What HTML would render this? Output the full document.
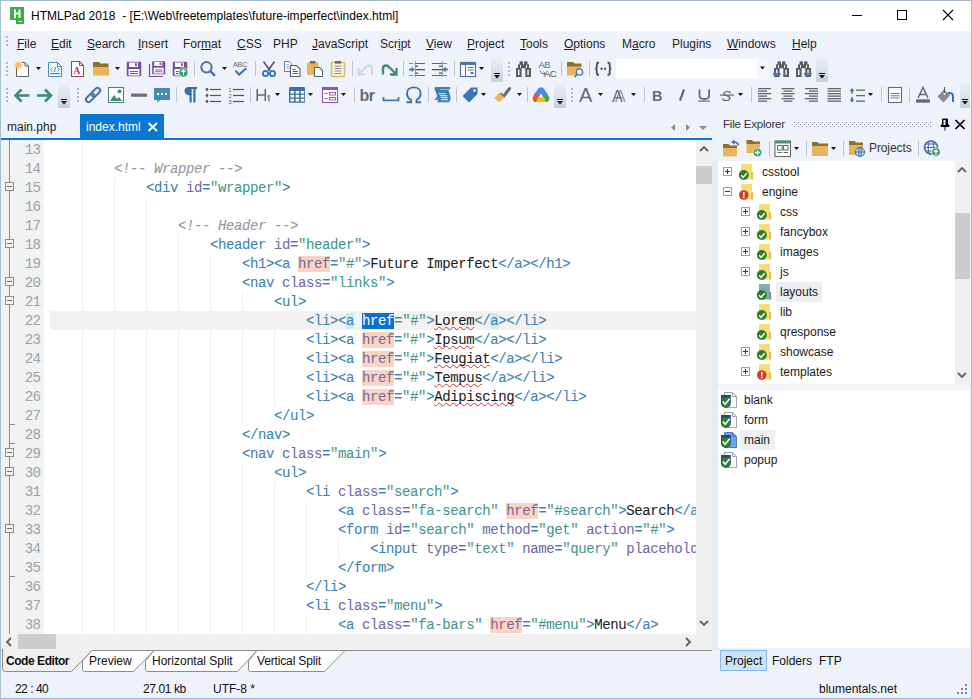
<!DOCTYPE html>
<html><head><meta charset="utf-8"><style>
*{margin:0;padding:0;box-sizing:border-box}
html,body{width:972px;height:699px;overflow:hidden;background:#eef3fb;font-family:"Liberation Sans",sans-serif;font-size:12px;color:#000;position:relative}
.abs,.tx{position:absolute;white-space:pre}
.tx{line-height:1}
#frame{position:absolute;left:0;top:0;width:972px;height:699px;border:1px solid #a4c0d6;border-bottom-color:#90c0ea;border-top-color:#a6b8cc;pointer-events:none}
#title{position:absolute;left:1px;top:1px;width:970px;height:30px;background:#fff}
#editor{position:absolute;left:1px;top:140px;width:695px;height:494px;background:#fff;overflow:hidden}
#gutter{position:absolute;left:0;top:0;width:43px;height:494px;background:#f0f2f4}
#foldline{position:absolute;left:8px;top:0;width:1px;height:494px;background:#8c8c8c}
.fb{position:absolute;left:4px;width:9px;height:9px;border:1px solid #8c8c8c;background:#f0f2f4}
.fb:after{content:"";position:absolute;left:1px;top:3px;width:5px;height:1px;background:#6c6c6c}
.ft{position:absolute;left:8px;width:6px;height:1px;background:#8c8c8c}
.ln{position:absolute;left:0;width:39.5px;text-align:right;font-family:"Liberation Mono",monospace;font-size:14.2px;letter-spacing:-0.6px;line-height:19px;color:#a0a0a0;margin-top:1px}
.code{position:absolute;left:49px;top:1px;font-family:"Liberation Mono",monospace;font-size:14px;letter-spacing:-0.4px;-webkit-text-stroke:0.05px;line-height:19px;white-space:pre;color:#1b1b1b}
.cur{position:absolute;left:49px;width:660px;height:19px;background:#f2f2f2}
.g{position:absolute;width:1px;height:19px;background:#efefef}
.t,.m{color:#3a82b0}
.m{background:#cdebf0}
.a{color:#6d6aa8}
.e{color:#3a82b0}
.v{color:#3e968b}
.c{color:#959595;font-style:italic}
.h{color:#7b6a96;background:#f9d3c3}
.s{color:#fff;background:#0a6fd2}
.w{text-decoration:underline wavy #d03030;text-decoration-thickness:1px;text-underline-offset:1px;text-decoration-skip-ink:none}
#vscroll{position:absolute;left:696px;top:140px;width:16px;height:494px;background:#f0f0f0}
#hscroll{position:absolute;left:1px;top:634px;width:711px;height:16px;background:#f0f0f0}
#splitter{position:absolute;left:712px;top:161px;width:6px;height:489px;background:#e2ecf8}
#rpanel{position:absolute;left:718px;top:161px;width:252px;height:223px;background:#fff}
#rgap{position:absolute;left:718px;top:384px;width:252px;height:6px;background:#f2f4f8}
#rlist{position:absolute;left:718px;top:390px;width:252px;height:258px;background:#fff}
#tabline{position:absolute;left:1px;top:138px;width:711px;height:2px;background:#0a78d0}
#acttab{position:absolute;left:80px;top:114px;width:84px;height:25px;background:#0a78d0}
.mi{top:38px;font-size:12px;color:#1e1e1e}
u{text-decoration:underline;text-underline-offset:1px;text-decoration-skip-ink:none}
.tr{font-size:12px;color:#1a1a1a;margin-top:1px}

</style></head><body>
<div id="title"></div>
<div class="tx" style="left:31px;top:10px;font-size:12px;letter-spacing:0.03px">HTMLPad 2018  - [E:\Web\freetemplates\future-imperfect\index.html]</div>
<div class="abs" style="left:852px;top:15px;width:10px;height:1px;background:#000"></div>
<div class="abs" style="left:897px;top:10px;width:10px;height:10px;border:1px solid #000"></div>
<svg class="abs" style="left:942px;top:9px" width="12" height="12"><path d="M1 1L11 11M11 1L1 11" stroke="#000" stroke-width="1.1"/></svg>
<!-- menu -->
<div id="menu">
<span class="tx mi" style="left:17px"><u>F</u>ile</span>
<span class="tx mi" style="left:51px"><u>E</u>dit</span>
<span class="tx mi" style="left:87px"><u>S</u>earch</span>
<span class="tx mi" style="left:138px"><u>I</u>nsert</span>
<span class="tx mi" style="left:183px">For<u>m</u>at</span>
<span class="tx mi" style="left:237px"><u>C</u>SS</span>
<span class="tx mi" style="left:273px">PHP</span>
<span class="tx mi" style="left:312px"><u>J</u>avaScript</span>
<span class="tx mi" style="left:380px">Scr<u>i</u>pt</span>
<span class="tx mi" style="left:426px"><u>V</u>iew</span>
<span class="tx mi" style="left:467px"><u>P</u>roject</span>
<span class="tx mi" style="left:520px"><u>T</u>ools</span>
<span class="tx mi" style="left:564px"><u>O</u>ptions</span>
<span class="tx mi" style="left:622px">M<u>a</u>cro</span>
<span class="tx mi" style="left:672px">Plugins</span>
<span class="tx mi" style="left:727px"><u>W</u>indows</span>
<span class="tx mi" style="left:792px"><u>H</u>elp</span>
</div>
<div id="tabline"></div>
<div id="acttab"></div>
<div class="tx" style="left:7px;top:121px;font-size:12px;color:#1e1e1e">main.php</div>
<div class="tx" style="left:86px;top:121px;font-size:12px;color:#fff">index.html</div>
<svg class="abs" style="left:147px;top:122px" width="12" height="10"><path d="M1.5 1L10 9M10 1L1.5 9" stroke="#fff" stroke-width="1.9"/></svg>
<svg class="abs" style="left:668px;top:121px" width="42" height="12"><path d="M7 3L3 6.5L7 10Z" fill="#8a8a8a"/><path d="M18 3L22 6.5L18 10Z" fill="#8a8a8a"/><path d="M31 5H39L35 9Z" fill="#8a8a8a"/></svg>
<div class="tx" style="left:723px;top:119px;font-size:11.5px;letter-spacing:-0.2px;color:#333">File Explorer</div>
<svg class="abs" style="left:794px;top:122px" width="138" height="6"><defs><pattern id="dots" width="4" height="4" patternUnits="userSpaceOnUse"><rect x="0" y="0" width="1" height="1" fill="#858c98"/><rect x="2" y="2" width="1" height="1" fill="#858c98"/><rect x="1" y="1" width="1" height="1" fill="#ffffff"/><rect x="3" y="3" width="1" height="1" fill="#ffffff"/></pattern></defs><rect x="0" y="0" width="138" height="5" fill="url(#dots)"/></svg>
<svg class="abs" style="left:940px;top:118px" width="10" height="13"><path d="M2.5 1H7.5V7H9V8.5H1V7H2.5Z M5 8.5V12.5" fill="#000" stroke="#000" stroke-width="1"/><rect x="3.5" y="2" width="2" height="5" fill="#fff"/></svg>
<svg class="abs" style="left:954px;top:119px" width="12" height="11"><path d="M1.5 1L10.5 10M10.5 1L1.5 10" stroke="#000" stroke-width="1.7"/></svg>
<div id="vscroll"></div>
<div class="abs" style="left:696px;top:166px;width:16px;height:18px;background:#cdcdcd"></div>
<svg class="abs" style="left:699px;top:145px" width="10" height="8"><path d="M1 6L5 2L9 6" stroke="#606060" stroke-width="1.8" fill="none"/></svg>
<svg class="abs" style="left:699px;top:619px" width="10" height="8"><path d="M1 2L5 6L9 2" stroke="#606060" stroke-width="1.8" fill="none"/></svg>
<div id="hscroll"></div>
<div class="abs" style="left:18px;top:634px;width:38px;height:15px;background:#cdcdcd"></div>
<svg class="abs" style="left:5px;top:637px" width="8" height="10"><path d="M6 1L2 5L6 9" stroke="#606060" stroke-width="1.8" fill="none"/></svg>
<svg class="abs" style="left:684px;top:637px" width="8" height="10"><path d="M2 1L6 5L2 9" stroke="#606060" stroke-width="1.8" fill="none"/></svg>
<div class="abs" style="left:1px;top:650px;width:711px;height:1px;background:#a0a0a0"></div>
<div id="splitter"></div>
<div id="rpanel"></div>
<div class="abs" style="left:955px;top:161px;width:15px;height:223px;background:#f0f0f0"></div>
<div class="abs" style="left:955px;top:213px;width:15px;height:66px;background:#cdcdcd"></div>
<svg class="abs" style="left:957px;top:166px" width="10" height="8"><path d="M1 6L5 2L9 6" stroke="#606060" stroke-width="1.8" fill="none"/></svg>
<svg class="abs" style="left:957px;top:371px" width="10" height="8"><path d="M1 2L5 6L9 2" stroke="#606060" stroke-width="1.8" fill="none"/></svg>
<div id="rgap"></div>
<div id="rlist"></div>
<div class="tx" style="left:869px;top:142px;font-size:12px;letter-spacing:-0.1px;color:#333">Projects</div>
<!-- bottom tabs -->
<svg class="abs" style="left:0;top:649px" width="712" height="24">
<path d="M1.5 1.5H82V12V21.5Q82 22.5 83 22.5H71.5L82 12" fill="none"/>
<path d="M154 1.5H92L82.5 12V20.5Q82.5 22.5 84.5 22.5H133.5L154 1.5Z" fill="#fff" stroke="#8c8c8c" stroke-width="1"/>
<path d="M257 1.5H154L145.5 12V20.5Q145.5 22.5 147.5 22.5H237.5L257 1.5Z" fill="#fff" stroke="#8c8c8c" stroke-width="1"/>
<path d="M345 1.5H257L248.5 12V20.5Q248.5 22.5 250.5 22.5H324.5L345 1.5Z" fill="#fff" stroke="#8c8c8c" stroke-width="1"/>
<path d="M1 0.5V1H82" fill="none"/>
<path d="M2.5 0V19.5Q2.5 22.5 5.5 22.5H71.5L92 1.5H712" fill="#f0f0f0" stroke="#8c8c8c" stroke-width="1"/>
</svg>
<div class="tx" style="left:6px;top:655px;font-size:12px;font-weight:bold;letter-spacing:-0.45px;color:#111">Code Editor</div>
<div class="tx" style="left:89px;top:655px;font-size:12px;color:#111">Preview</div>
<div class="tx" style="left:152px;top:655px;font-size:12px;color:#111">Horizontal Split</div>
<div class="tx" style="left:257px;top:655px;font-size:12px;letter-spacing:-0.15px;color:#111">Vertical Split</div>
<div class="abs" style="left:720px;top:650px;width:47px;height:21px;background:#cde4f7;border:1px solid #84b8ea"></div>
<div class="tx" style="left:725px;top:655px;font-size:12px;color:#111">Project</div>
<div class="tx" style="left:772px;top:655px;font-size:12px;color:#111">Folders</div>
<div class="tx" style="left:819px;top:655px;font-size:12px;color:#111">FTP</div>
<!-- status -->
<div class="tx" style="left:15px;top:683px;font-size:12px;letter-spacing:-0.6px;word-spacing:0.3px;color:#111">22 : 40</div>
<div class="tx" style="left:143px;top:683px;font-size:12px;letter-spacing:-0.4px;color:#111">27.01 kb</div>
<div class="tx" style="left:213px;top:683px;font-size:12px;color:#111">UTF-8 *</div>
<div class="tx" style="left:819px;top:683px;font-size:12px;color:#111">blumentals.net</div>
<svg class="abs" style="left:957px;top:684px" width="12" height="12"><g fill="#808080"><rect x="8" y="0" width="2" height="2"/><rect x="4" y="4" width="2" height="2"/><rect x="8" y="4" width="2" height="2"/><rect x="0" y="8" width="2" height="2"/><rect x="4" y="8" width="2" height="2"/><rect x="8" y="8" width="2" height="2"/></g></svg>

<div id="editor"><div id="gutter"><div id="foldline"></div><div class="fb" style="top:42px"></div>
<div class="fb" style="top:99px"></div>
<div class="fb" style="top:137px"></div>
<div class="fb" style="top:156px"></div>
<div class="fb" style="top:308px"></div>
<div class="fb" style="top:327px"></div>
<div class="fb" style="top:384px"></div>
<div class="ft" style="top:284px"></div>
<div class="ft" style="top:303px"></div>
<div class="ft" style="top:436px"></div></div><i class="g" style="left:81px;top:0px"></i>
<i class="g" style="left:81px;top:19px"></i>
<i class="g" style="left:81px;top:38px"></i>
<i class="g" style="left:113px;top:38px"></i>
<i class="g" style="left:81px;top:57px"></i>
<i class="g" style="left:113px;top:57px"></i>
<i class="g" style="left:145px;top:57px"></i>
<i class="g" style="left:81px;top:76px"></i>
<i class="g" style="left:113px;top:76px"></i>
<i class="g" style="left:145px;top:76px"></i>
<i class="g" style="left:81px;top:95px"></i>
<i class="g" style="left:113px;top:95px"></i>
<i class="g" style="left:145px;top:95px"></i>
<i class="g" style="left:177px;top:95px"></i>
<i class="g" style="left:81px;top:114px"></i>
<i class="g" style="left:113px;top:114px"></i>
<i class="g" style="left:145px;top:114px"></i>
<i class="g" style="left:177px;top:114px"></i>
<i class="g" style="left:209px;top:114px"></i>
<i class="g" style="left:81px;top:133px"></i>
<i class="g" style="left:113px;top:133px"></i>
<i class="g" style="left:145px;top:133px"></i>
<i class="g" style="left:177px;top:133px"></i>
<i class="g" style="left:209px;top:133px"></i>
<i class="g" style="left:81px;top:152px"></i>
<i class="g" style="left:113px;top:152px"></i>
<i class="g" style="left:145px;top:152px"></i>
<i class="g" style="left:177px;top:152px"></i>
<i class="g" style="left:209px;top:152px"></i>
<i class="g" style="left:241px;top:152px"></i>
<i class="g" style="left:81px;top:171px"></i>
<i class="g" style="left:113px;top:171px"></i>
<i class="g" style="left:145px;top:171px"></i>
<i class="g" style="left:177px;top:171px"></i>
<i class="g" style="left:209px;top:171px"></i>
<i class="g" style="left:241px;top:171px"></i>
<i class="g" style="left:273px;top:171px"></i>
<i class="g" style="left:81px;top:190px"></i>
<i class="g" style="left:113px;top:190px"></i>
<i class="g" style="left:145px;top:190px"></i>
<i class="g" style="left:177px;top:190px"></i>
<i class="g" style="left:209px;top:190px"></i>
<i class="g" style="left:241px;top:190px"></i>
<i class="g" style="left:273px;top:190px"></i>
<i class="g" style="left:81px;top:209px"></i>
<i class="g" style="left:113px;top:209px"></i>
<i class="g" style="left:145px;top:209px"></i>
<i class="g" style="left:177px;top:209px"></i>
<i class="g" style="left:209px;top:209px"></i>
<i class="g" style="left:241px;top:209px"></i>
<i class="g" style="left:273px;top:209px"></i>
<i class="g" style="left:81px;top:228px"></i>
<i class="g" style="left:113px;top:228px"></i>
<i class="g" style="left:145px;top:228px"></i>
<i class="g" style="left:177px;top:228px"></i>
<i class="g" style="left:209px;top:228px"></i>
<i class="g" style="left:241px;top:228px"></i>
<i class="g" style="left:273px;top:228px"></i>
<i class="g" style="left:81px;top:247px"></i>
<i class="g" style="left:113px;top:247px"></i>
<i class="g" style="left:145px;top:247px"></i>
<i class="g" style="left:177px;top:247px"></i>
<i class="g" style="left:209px;top:247px"></i>
<i class="g" style="left:241px;top:247px"></i>
<i class="g" style="left:273px;top:247px"></i>
<i class="g" style="left:81px;top:266px"></i>
<i class="g" style="left:113px;top:266px"></i>
<i class="g" style="left:145px;top:266px"></i>
<i class="g" style="left:177px;top:266px"></i>
<i class="g" style="left:209px;top:266px"></i>
<i class="g" style="left:241px;top:266px"></i>
<i class="g" style="left:81px;top:285px"></i>
<i class="g" style="left:113px;top:285px"></i>
<i class="g" style="left:145px;top:285px"></i>
<i class="g" style="left:177px;top:285px"></i>
<i class="g" style="left:209px;top:285px"></i>
<i class="g" style="left:81px;top:304px"></i>
<i class="g" style="left:113px;top:304px"></i>
<i class="g" style="left:145px;top:304px"></i>
<i class="g" style="left:177px;top:304px"></i>
<i class="g" style="left:209px;top:304px"></i>
<i class="g" style="left:81px;top:323px"></i>
<i class="g" style="left:113px;top:323px"></i>
<i class="g" style="left:145px;top:323px"></i>
<i class="g" style="left:177px;top:323px"></i>
<i class="g" style="left:209px;top:323px"></i>
<i class="g" style="left:241px;top:323px"></i>
<i class="g" style="left:81px;top:342px"></i>
<i class="g" style="left:113px;top:342px"></i>
<i class="g" style="left:145px;top:342px"></i>
<i class="g" style="left:177px;top:342px"></i>
<i class="g" style="left:209px;top:342px"></i>
<i class="g" style="left:241px;top:342px"></i>
<i class="g" style="left:273px;top:342px"></i>
<i class="g" style="left:81px;top:361px"></i>
<i class="g" style="left:113px;top:361px"></i>
<i class="g" style="left:145px;top:361px"></i>
<i class="g" style="left:177px;top:361px"></i>
<i class="g" style="left:209px;top:361px"></i>
<i class="g" style="left:241px;top:361px"></i>
<i class="g" style="left:273px;top:361px"></i>
<i class="g" style="left:305px;top:361px"></i>
<i class="g" style="left:81px;top:380px"></i>
<i class="g" style="left:113px;top:380px"></i>
<i class="g" style="left:145px;top:380px"></i>
<i class="g" style="left:177px;top:380px"></i>
<i class="g" style="left:209px;top:380px"></i>
<i class="g" style="left:241px;top:380px"></i>
<i class="g" style="left:273px;top:380px"></i>
<i class="g" style="left:305px;top:380px"></i>
<i class="g" style="left:81px;top:399px"></i>
<i class="g" style="left:113px;top:399px"></i>
<i class="g" style="left:145px;top:399px"></i>
<i class="g" style="left:177px;top:399px"></i>
<i class="g" style="left:209px;top:399px"></i>
<i class="g" style="left:241px;top:399px"></i>
<i class="g" style="left:273px;top:399px"></i>
<i class="g" style="left:305px;top:399px"></i>
<i class="g" style="left:337px;top:399px"></i>
<i class="g" style="left:81px;top:418px"></i>
<i class="g" style="left:113px;top:418px"></i>
<i class="g" style="left:145px;top:418px"></i>
<i class="g" style="left:177px;top:418px"></i>
<i class="g" style="left:209px;top:418px"></i>
<i class="g" style="left:241px;top:418px"></i>
<i class="g" style="left:273px;top:418px"></i>
<i class="g" style="left:305px;top:418px"></i>
<i class="g" style="left:81px;top:437px"></i>
<i class="g" style="left:113px;top:437px"></i>
<i class="g" style="left:145px;top:437px"></i>
<i class="g" style="left:177px;top:437px"></i>
<i class="g" style="left:209px;top:437px"></i>
<i class="g" style="left:241px;top:437px"></i>
<i class="g" style="left:273px;top:437px"></i>
<i class="g" style="left:81px;top:456px"></i>
<i class="g" style="left:113px;top:456px"></i>
<i class="g" style="left:145px;top:456px"></i>
<i class="g" style="left:177px;top:456px"></i>
<i class="g" style="left:209px;top:456px"></i>
<i class="g" style="left:241px;top:456px"></i>
<i class="g" style="left:273px;top:456px"></i>
<i class="g" style="left:81px;top:475px"></i>
<i class="g" style="left:113px;top:475px"></i>
<i class="g" style="left:145px;top:475px"></i>
<i class="g" style="left:177px;top:475px"></i>
<i class="g" style="left:209px;top:475px"></i>
<i class="g" style="left:241px;top:475px"></i>
<i class="g" style="left:273px;top:475px"></i>
<i class="g" style="left:305px;top:475px"></i>
<div class="cur" style="top:171px"></div>
<div class="ln" style="top:0px">13</div>
<div class="ln" style="top:19px">14</div>
<div class="ln" style="top:38px">15</div>
<div class="ln" style="top:57px">16</div>
<div class="ln" style="top:76px">17</div>
<div class="ln" style="top:95px">18</div>
<div class="ln" style="top:114px">19</div>
<div class="ln" style="top:133px">20</div>
<div class="ln" style="top:152px">21</div>
<div class="ln" style="top:171px">22</div>
<div class="ln" style="top:190px">23</div>
<div class="ln" style="top:209px">24</div>
<div class="ln" style="top:228px">25</div>
<div class="ln" style="top:247px">26</div>
<div class="ln" style="top:266px">27</div>
<div class="ln" style="top:285px">28</div>
<div class="ln" style="top:304px">29</div>
<div class="ln" style="top:323px">30</div>
<div class="ln" style="top:342px">31</div>
<div class="ln" style="top:361px">32</div>
<div class="ln" style="top:380px">33</div>
<div class="ln" style="top:399px">34</div>
<div class="ln" style="top:418px">35</div>
<div class="ln" style="top:437px">36</div>
<div class="ln" style="top:456px">37</div>
<div class="ln" style="top:475px">38</div>
<div class="code">
        <span class="c">&lt;!-- Wrapper --&gt;</span>
            <span class="t">&lt;div</span><span class="x"> </span><span class="a">id</span><span class="e">=</span><span class="v">&quot;wrapper&quot;</span><span class="t">&gt;</span>

                <span class="c">&lt;!-- Header --&gt;</span>
                    <span class="t">&lt;header</span><span class="x"> </span><span class="a">id</span><span class="e">=</span><span class="v">&quot;header&quot;</span><span class="t">&gt;</span>
                        <span class="t">&lt;h1&gt;&lt;a</span><span class="x"> </span><span class="h">href</span><span class="e">=</span><span class="v">&quot;#&quot;</span><span class="t">&gt;</span><span class="x">Future Imperfect</span><span class="t">&lt;/a&gt;&lt;/h1&gt;</span>
                        <span class="t">&lt;nav</span><span class="x"> </span><span class="a">class</span><span class="e">=</span><span class="v">&quot;links&quot;</span><span class="t">&gt;</span>
                            <span class="t">&lt;ul&gt;</span>
                                <span class="t">&lt;li&gt;&lt;</span><span class="m">a</span><span class="x"> </span><span class="s">href</span><span class="e">=</span><span class="v">&quot;#&quot;</span><span class="t">&gt;</span><span class="w">Lorem</span><span class="t">&lt;/</span><span class="m">a</span><span class="t">&gt;&lt;/li&gt;</span>
                                <span class="t">&lt;li&gt;&lt;a</span><span class="x"> </span><span class="h">href</span><span class="e">=</span><span class="v">&quot;#&quot;</span><span class="t">&gt;</span><span class="w">Ipsum</span><span class="t">&lt;/a&gt;&lt;/li&gt;</span>
                                <span class="t">&lt;li&gt;&lt;a</span><span class="x"> </span><span class="h">href</span><span class="e">=</span><span class="v">&quot;#&quot;</span><span class="t">&gt;</span><span class="w">Feugiat</span><span class="t">&lt;/a&gt;&lt;/li&gt;</span>
                                <span class="t">&lt;li&gt;&lt;a</span><span class="x"> </span><span class="h">href</span><span class="e">=</span><span class="v">&quot;#&quot;</span><span class="t">&gt;</span><span class="w">Tempus</span><span class="t">&lt;/a&gt;&lt;/li&gt;</span>
                                <span class="t">&lt;li&gt;&lt;a</span><span class="x"> </span><span class="h">href</span><span class="e">=</span><span class="v">&quot;#&quot;</span><span class="t">&gt;</span><span class="w">Adipiscing</span><span class="t">&lt;/a&gt;&lt;/li&gt;</span>
                            <span class="t">&lt;/ul&gt;</span>
                        <span class="t">&lt;/nav&gt;</span>
                        <span class="t">&lt;nav</span><span class="x"> </span><span class="a">class</span><span class="e">=</span><span class="v">&quot;main&quot;</span><span class="t">&gt;</span>
                            <span class="t">&lt;ul&gt;</span>
                                <span class="t">&lt;li</span><span class="x"> </span><span class="a">class</span><span class="e">=</span><span class="v">&quot;search&quot;</span><span class="t">&gt;</span>
                                    <span class="t">&lt;a</span><span class="x"> </span><span class="a">class</span><span class="e">=</span><span class="v">&quot;fa-search&quot;</span><span class="x"> </span><span class="h">href</span><span class="e">=</span><span class="v">&quot;#search&quot;</span><span class="t">&gt;</span><span class="x">Search</span><span class="t">&lt;/a&gt;</span>
                                    <span class="t">&lt;form</span><span class="x"> </span><span class="a">id</span><span class="e">=</span><span class="v">&quot;search&quot;</span><span class="x"> </span><span class="a">method</span><span class="e">=</span><span class="v">&quot;get&quot;</span><span class="x"> </span><span class="a">action</span><span class="e">=</span><span class="v">&quot;#&quot;</span><span class="t">&gt;</span>
                                        <span class="t">&lt;input</span><span class="x"> </span><span class="a">type</span><span class="e">=</span><span class="v">&quot;text&quot;</span><span class="x"> </span><span class="a">name</span><span class="e">=</span><span class="v">&quot;query&quot;</span><span class="x"> </span><span class="a">placeholder</span><span class="e">=</span><span class="v">&quot;Search&quot;</span><span class="x"> </span><span class="t">/&gt;</span>
                                    <span class="t">&lt;/form&gt;</span>
                                <span class="t">&lt;/li&gt;</span>
                                <span class="t">&lt;li</span><span class="x"> </span><span class="a">class</span><span class="e">=</span><span class="v">&quot;menu&quot;</span><span class="t">&gt;</span>
                                    <span class="t">&lt;a</span><span class="x"> </span><span class="a">class</span><span class="e">=</span><span class="v">&quot;fa-bars&quot;</span><span class="x"> </span><span class="h">href</span><span class="e">=</span><span class="v">&quot;#menu&quot;</span><span class="t">&gt;</span><span class="x">Menu</span><span class="t">&lt;/a&gt;</span></div></div>
<svg class="abs" style="left:0;top:0" width="972" height="699"><defs><linearGradient id="ovg" x1="0" y1="0" x2="0" y2="1"><stop offset="0" stop-color="#e8eef6"/><stop offset="0.5" stop-color="#dce3ec"/><stop offset="1" stop-color="#c6ced9"/></linearGradient></defs>
<rect x="10" y="7" width="14" height="13" fill="#3fae49"/><rect x="16" y="19" width="8" height="5" fill="#3fae49"/><path d="M15 9.5v8.5M19.5 9.5v8.5M15 13.5h4.5" stroke="#fff" stroke-width="2"/><path d="M18 21.5h4" stroke="#d8f0d8" stroke-width="1"/>
<rect x="6" y="36" width="2" height="2" fill="#b4b8c0"/><rect x="6" y="40" width="2" height="2" fill="#b4b8c0"/><rect x="6" y="44" width="2" height="2" fill="#b4b8c0"/>
<rect x="6" y="62" width="2" height="2" fill="#b4b8c0"/><rect x="6" y="66" width="2" height="2" fill="#b4b8c0"/><rect x="6" y="70" width="2" height="2" fill="#b4b8c0"/><rect x="6" y="74" width="2" height="2" fill="#b4b8c0"/>
<rect x="6" y="88" width="2" height="2" fill="#b4b8c0"/><rect x="6" y="92" width="2" height="2" fill="#b4b8c0"/><rect x="6" y="96" width="2" height="2" fill="#b4b8c0"/><rect x="6" y="100" width="2" height="2" fill="#b4b8c0"/>
<path d="M16.5 66.5v10h12v-10.5l-3.5-3.5h-4" fill="#fff" stroke="#5f6368" stroke-width="1"/><path d="M25 62.5v3.5h3.5" fill="none" stroke="#5f6368"/>
<g stroke="#f0b840" stroke-width="1.2"><path d="M18.5 61v8.5M14.2 65.2h8.5M15.5 62.2l6 6M21.5 62.2l-6 6"/></g><circle cx="18.5" cy="65.2" r="1.8" fill="#f7c548"/>
<path d="M36 67h5l-2.5 3z" fill="#111"/>
<path d="M48.5 62.5h9l4 4v10h-13z" fill="#f4f9fc" stroke="#4d8bb0"/><path d="M57.5 62.5v4h4" fill="none" stroke="#4d8bb0"/><path d="M52.5 67.5l-2 2 2 2M57.5 67.5l2 2-2 2M55.8 66.8l-1.6 5.4" fill="none" stroke="#4d8bb0" stroke-width="1"/><rect x="50" y="73" width="10" height="1.2" fill="#4d8bb0"/>
<path d="M71.5 61.5h8l4 4v11h-12z" fill="#fff" stroke="#a04058" stroke-width="1.1"/><path d="M79.5 61.5v4h4" fill="none" stroke="#a04058"/><text x="73.3" y="74" font-family="Liberation Serif" font-size="10" font-weight="bold" fill="#c03050">A</text>
<path d="M93 62h6l1.5 1.5h8v4h-15.5z" fill="#8c7030"/><path d="M93 67h16v8.6h-16z" fill="#e8b55c"/>
<path d="M115 67h5l-2.5 3z" fill="#111"/>
<rect x="126.75" y="61.75" width="14.5" height="14.5" rx="1" fill="#7a4d9c"/><rect x="129" y="62.5" width="9" height="4.5" fill="#fff"/><rect x="135" y="63.2" width="1.8" height="2.8" fill="#7a4d9c"/><rect x="128.5" y="69" width="11" height="6.5" fill="#fff"/><rect x="130" y="71" width="8" height="1" fill="#7a4d9c"/><rect x="130" y="73" width="8" height="1" fill="#7a4d9c"/>
<path d="M149.5 64v12.5h13" fill="none" stroke="#7a4d9c" stroke-width="1.2"/>
<g transform="translate(151.5,60.5) scale(0.9)"><rect x="0.75" y="0.75" width="14.5" height="14.5" rx="1" fill="#7a4d9c"/><rect x="3" y="1.5" width="9" height="4.5" fill="#fff"/><rect x="9" y="2.2" width="1.8" height="2.8" fill="#7a4d9c"/><rect x="2.5" y="8" width="11" height="6.5" fill="#fff"/><rect x="4" y="10" width="8" height="1" fill="#7a4d9c"/><rect x="4" y="12" width="8" height="1" fill="#7a4d9c"/></g>
<rect x="172.75" y="61.75" width="14.5" height="14.5" rx="1" fill="#7a4d9c"/><rect x="175" y="62.5" width="9" height="4.5" fill="#fff"/><rect x="181" y="63.2" width="1.8" height="2.8" fill="#7a4d9c"/><rect x="174.5" y="69" width="11" height="6.5" fill="#fff"/><rect x="176" y="71" width="8" height="1" fill="#7a4d9c"/><rect x="176" y="73" width="8" height="1" fill="#7a4d9c"/>
<circle cx="183.5" cy="72.5" r="4.6" fill="#3f9a6a" stroke="#eef3fb" stroke-width="0.8"/><path d="M183.5 75.5v-5.5M181.2 72.2l2.3-2.3 2.3 2.3" fill="none" stroke="#fff" stroke-width="1.1"/>
<rect x="194" y="61" width="1" height="15" fill="#bcc4d0"/>
<circle cx="206.5" cy="67.3" r="5.2" fill="none" stroke="#4a76a6" stroke-width="2"/><path d="M210.3 71.2l4.6 4.6" stroke="#4a76a6" stroke-width="2.4"/>
<path d="M222 67h5l-2.5 3z" fill="#111"/>
<text x="233" y="66.8" font-family="Liberation Sans" font-size="7.2" fill="#666" letter-spacing="-0.2">ABC</text><path d="M235.5 70.8l3.6 3.8 7.2-6.3" fill="none" stroke="#3f6fa0" stroke-width="2"/>
<rect x="255" y="61" width="1" height="15" fill="#bcc4d0"/>
<path d="M263.5 61.5l6.5 9M274.5 61.5l-6.5 9" stroke="#5a5f66" stroke-width="1.8"/><circle cx="265.5" cy="73.5" r="2.6" fill="none" stroke="#3572b8" stroke-width="1.8"/><circle cx="272.5" cy="73.5" r="2.6" fill="none" stroke="#3572b8" stroke-width="1.8"/>
<path d="M284.5 61.5h5l2 2v8h-7z" fill="#fff" stroke="#777"/><path d="M286 64.5h3M286 66.5h4M286 68.5h4" stroke="#8aa8c8" stroke-width="0.8"/><path d="M290.5 65.5h6l3.5 3.5v7.5h-9.5z" fill="#fff" stroke="#5a6068" stroke-width="1.1"/><path d="M292.5 69.5h3M292.5 71.5h5.5M292.5 73.5h5.5" stroke="#5a6068" stroke-width="1"/>
<rect x="307" y="62.5" width="11.5" height="12.5" rx="1" fill="#e8b55c"/><rect x="310" y="61" width="5.5" height="2.5" fill="#6a6a6a"/><path d="M314.5 67.5h5l3 3v6h-8z" fill="#fff" stroke="#5a6068" stroke-width="1.1"/>
<rect x="331.5" y="62.5" width="13" height="14" rx="1" fill="#fff6e0" stroke="#dcb46a" stroke-width="1.6"/><rect x="335" y="61" width="6" height="2.6" fill="#6a6a6a"/><path d="M334.5 66h7M334.5 68.5h7M334.5 71h7M334.5 73.5h7" stroke="#8888a0" stroke-width="1"/>
<rect x="352" y="61" width="1" height="15" fill="#bcc4d0"/>
<path d="M372 74.5v-6c0-2-1.5-3-3-3s-2.5 0.8-3.5 2l-6.5 6.5" fill="none" stroke="#d3d5da" stroke-width="2.1"/><path d="M358.5 68v6.5h6.5" fill="none" stroke="#d3d5da" stroke-width="2.1"/>
<path d="M383 74.5v-6c0-2 1.5-3 3-3s2.5 0.8 3.5 2l6.5 6.5" fill="none" stroke="#3f8c70" stroke-width="2.3"/><path d="M396.5 68v6.5h-6.5" fill="none" stroke="#3f8c70" stroke-width="2.3"/>
<rect x="403" y="61" width="1" height="15" fill="#bcc4d0"/>
<rect x="409" y="63" width="4" height="1" fill="#888"/><rect x="409" y="75" width="4" height="1" fill="#888"/>
<rect x="415" y="63" width="10" height="1" fill="#666"/><rect x="415" y="75" width="10" height="1" fill="#666"/>
<rect x="415" y="65.5" width="3" height="1.3" fill="#555"/><rect x="415" y="72.5" width="3" height="1.3" fill="#555"/>
<rect x="415" y="69" width="10" height="1.3" fill="#555"/>
<rect x="414.8" y="61" width="0.8" height="16" fill="#888"/><path d="M409 69.5h3.5" stroke="#3d74b4" stroke-width="1.8"/><path d="M411.5 66.5l3 3-3 3z" fill="#3d74b4"/>
<rect x="443" y="63" width="4" height="1" fill="#888"/><rect x="443" y="75" width="4" height="1" fill="#888"/>
<rect x="432" y="63" width="10" height="1" fill="#666"/><rect x="432" y="75" width="10" height="1" fill="#666"/>
<rect x="439" y="65.5" width="3" height="1.3" fill="#555"/><rect x="439" y="72.5" width="3" height="1.3" fill="#555"/>
<rect x="432" y="69" width="10" height="1.3" fill="#555"/>
<rect x="442" y="61" width="0.8" height="16" fill="#888"/><path d="M444.5 69.5h3.5" stroke="#3d74b4" stroke-width="1.8"/><path d="M445.5 66.5l-3 3 3 3z" fill="#3d74b4"/>
<rect x="454" y="61" width="1" height="15" fill="#bcc4d0"/>
<rect x="460.5" y="62.5" width="15" height="14" fill="#fff" stroke="#4a76a6" stroke-width="1.2"/><rect x="460.5" y="62.5" width="15" height="2.5" fill="#4a76a6"/><rect x="465" y="65" width="1" height="11" fill="#4a76a6"/><path d="M467.5 67.5h6M467.5 70h6" stroke="#4a76a6" stroke-width="1"/><rect x="470.5" y="72" width="3" height="2" fill="#4a76a6"/>
<path d="M479 67h5l-2.5 3z" fill="#111"/>
<rect x="491" y="57" width="12" height="25" rx="1.5" fill="url(#ovg)"/><rect x="494.0" y="73" width="6" height="1" fill="#111"/><path d="M494.0 75h6l-3 3.5z" fill="#111"/>
<rect x="508" y="62" width="2" height="2" fill="#b4b8c0"/><rect x="508" y="66" width="2" height="2" fill="#b4b8c0"/><rect x="508" y="70" width="2" height="2" fill="#b4b8c0"/><rect x="508" y="74" width="2" height="2" fill="#b4b8c0"/>
<rect x="519.5" y="61.3" width="3.5" height="4" rx="1.2" fill="#5c5c5c"/><rect x="524" y="61.3" width="3.5" height="4" rx="1.2" fill="#5c5c5c"/><rect x="518" y="64.3" width="11" height="4" fill="#5c5c5c"/><rect x="516" y="68" width="5.6" height="9" fill="#5c5c5c"/><rect x="525.3" y="68" width="5.7" height="9" fill="#5c5c5c"/><rect x="518" y="69.7" width="1.5" height="5.3" fill="#eef3fb"/><rect x="527.3" y="69.7" width="1.5" height="5.3" fill="#eef3fb"/><rect x="520" y="65" width="1" height="3" fill="#eef3fb"/><rect x="526" y="65" width="1" height="3" fill="#eef3fb"/>
<text x="538.5" y="68.3" font-family="Liberation Sans" font-size="9.5" fill="#4a6fa0" letter-spacing="-0.5">AB</text><text x="544" y="77.3" font-family="Liberation Sans" font-size="9.5" fill="#555" letter-spacing="-0.5">AC</text><path d="M540 70.5l1.5 3h4M543.5 71.8l1.8 1.7-1.8 1.7" fill="none" stroke="#4a6fa0" stroke-width="0.9"/>
<rect x="561" y="61" width="1" height="15" fill="#bcc4d0"/>
<path d="M567 62h6l1.5 1.5h7v3.5h-14.5z" fill="#8c7030"/><path d="M567 66.5h14v9h-14z" fill="#e8b55c"/><circle cx="579.5" cy="72" r="3.2" fill="#dff0fa" stroke="#4a76a6" stroke-width="1.3"/><path d="M577.2 74.3l-2.8 3" stroke="#4a76a6" stroke-width="1.5"/>
<rect x="589" y="61" width="1" height="15" fill="#bcc4d0"/>
<path d="M599 62.5c-1.6 0-2.2 0.6-2.2 2v2.6c0 1-0.6 1.6-1.6 1.6 1 0 1.6 0.6 1.6 1.6v2.6c0 1.4 0.6 2 2.2 2" fill="none" stroke="#4f4f4f" stroke-width="1.8"/><path d="M607.5 62.5c1.6 0 2.2 0.6 2.2 2v2.6c0 1 0.6 1.6 1.6 1.6-1 0-1.6 0.6-1.6 1.6v2.6c0 1.4-0.6 2-2.2 2" fill="none" stroke="#4f4f4f" stroke-width="1.8"/><circle cx="601.5" cy="68.8" r="1.2" fill="#3f5f88"/><circle cx="605" cy="68.8" r="1.2" fill="#3f5f88"/>
<rect x="616" y="59" width="152" height="19.5" fill="#fff"/><rect x="757" y="59" width="11" height="19.5" fill="#f5f7fa"/>
<path d="M760 66.5h5l-2.5 3z" fill="#111"/>
<rect x="777.5" y="61.3" width="3.5" height="4" rx="1.2" fill="#5c5c5c"/><rect x="782" y="61.3" width="3.5" height="4" rx="1.2" fill="#5c5c5c"/><rect x="776" y="64.3" width="11" height="4" fill="#5c5c5c"/><rect x="774" y="68" width="5.6" height="9" fill="#5c5c5c"/><rect x="783.3" y="68" width="5.7" height="9" fill="#5c5c5c"/><rect x="776" y="69.7" width="1.5" height="5.3" fill="#eef3fb"/><rect x="785.3" y="69.7" width="1.5" height="5.3" fill="#eef3fb"/><rect x="778" y="65" width="1" height="3" fill="#eef3fb"/><rect x="784" y="65" width="1" height="3" fill="#eef3fb"/>
<path d="M780.5 74h-6" stroke="#3f78c0" stroke-width="1.8"/><path d="M775.5 71.2l-3 2.8 3 2.8z" fill="#3f78c0"/>
<rect x="799.5" y="61.3" width="3.5" height="4" rx="1.2" fill="#5c5c5c"/><rect x="804" y="61.3" width="3.5" height="4" rx="1.2" fill="#5c5c5c"/><rect x="798" y="64.3" width="11" height="4" fill="#5c5c5c"/><rect x="796" y="68" width="5.6" height="9" fill="#5c5c5c"/><rect x="805.3" y="68" width="5.7" height="9" fill="#5c5c5c"/><rect x="798" y="69.7" width="1.5" height="5.3" fill="#eef3fb"/><rect x="807.3" y="69.7" width="1.5" height="5.3" fill="#eef3fb"/><rect x="800" y="65" width="1" height="3" fill="#eef3fb"/><rect x="806" y="65" width="1" height="3" fill="#eef3fb"/>
<path d="M804 74h6" stroke="#3f78c0" stroke-width="1.8"/><path d="M809 71.2l3 2.8-3 2.8z" fill="#3f78c0"/>
<rect x="816" y="57" width="12" height="25" rx="1.5" fill="url(#ovg)"/><rect x="819.0" y="73" width="6" height="1" fill="#111"/><path d="M819.0 75h6l-3 3.5z" fill="#111"/>
<path d="M16 95.5h13.5" stroke="#3f8c70" stroke-width="2.6"/><path d="M21.5 89.5l-6 6 6 6" fill="none" stroke="#3f8c70" stroke-width="2.6"/>
<path d="M37 95.5h13.5" stroke="#3f8c70" stroke-width="2.6"/><path d="M45 89.5l6 6-6 6" fill="none" stroke="#3f8c70" stroke-width="2.6"/>
<rect x="58" y="83" width="12" height="25" rx="1.5" fill="url(#ovg)"/><rect x="61.0" y="99" width="6" height="1" fill="#111"/><path d="M61.0 101h6l-3 3.5z" fill="#111"/>
<rect x="77" y="88" width="2" height="2" fill="#b4b8c0"/><rect x="77" y="92" width="2" height="2" fill="#b4b8c0"/><rect x="77" y="96" width="2" height="2" fill="#b4b8c0"/><rect x="77" y="100" width="2" height="2" fill="#b4b8c0"/>
<g fill="none" stroke="#4a76a6" stroke-width="2.1"><rect x="85.2" y="95.2" width="10" height="5.2" rx="2.6" transform="rotate(-45 90.2 97.8)"/><rect x="90.8" y="89.6" width="10" height="5.2" rx="2.6" transform="rotate(-45 95.8 92.2)"/></g>
<rect x="108.5" y="87.5" width="15" height="15" fill="#fff" stroke="#3f8c70" stroke-width="1.1"/><circle cx="119.5" cy="91.3" r="1.9" fill="#3f8c70"/><path d="M110 101l4-6 3 4 2-2 3 4z" fill="#3f8c70"/>
<rect x="131" y="93.5" width="16" height="3.3" fill="#707070"/>
<path d="M154 88h16v12h-10l-2.5 3v-3h-3.5z" fill="#4b8ab6"/><rect x="157" y="93" width="2" height="2" fill="#fff"/><rect x="161" y="93" width="2" height="2" fill="#fff"/><rect x="165" y="93" width="2" height="2" fill="#fff"/>
<rect x="176" y="87" width="1" height="15" fill="#bcc4d0"/>
<path d="M188 87h9v2h-1.5v13.5h-2.2v-13.5h-1.6v13.5h-2.2v-7.3c-2.6 0-5-1.5-5-4.2s2.2-4 3.5-4z" fill="#3b6fa8"/>
<circle cx="207" cy="89.5" r="1.4" fill="#4a5a70"/><rect x="210" y="88.9" width="11" height="1.2" fill="#555"/>
<text x="228.5" y="91.8" font-family="Liberation Sans" font-size="5.5" fill="#4a5a70">1</text><rect x="233" y="88.9" width="11" height="1.2" fill="#555"/>
<circle cx="207" cy="95.5" r="1.4" fill="#4a5a70"/><rect x="210" y="94.9" width="11" height="1.2" fill="#555"/>
<text x="228.5" y="97.8" font-family="Liberation Sans" font-size="5.5" fill="#4a5a70">2</text><rect x="233" y="94.9" width="11" height="1.2" fill="#555"/>
<circle cx="207" cy="101.5" r="1.4" fill="#4a5a70"/><rect x="210" y="100.9" width="11" height="1.2" fill="#555"/>
<text x="228.5" y="103.8" font-family="Liberation Sans" font-size="5.5" fill="#4a5a70">3</text><rect x="233" y="100.9" width="11" height="1.2" fill="#555"/>
<rect x="250" y="87" width="1" height="15" fill="#bcc4d0"/>
<path d="M257.2 89v12M265.3 89v12M257.2 95h8" stroke="#6a6a6a" stroke-width="1.6"/><path d="M267.5 96.5l1.5-1v6" fill="none" stroke="#6a6a6a" stroke-width="1.2"/>
<path d="M275 93h5l-2.5 3z" fill="#111"/>
<rect x="289" y="87" width="16" height="15.7" rx="1" fill="#3f6fa8"/>
<rect x="290.5" y="91" width="3.5" height="2.6" fill="#fff"/>
<rect x="290.5" y="94.9" width="3.5" height="2.6" fill="#fff"/>
<rect x="290.5" y="98.8" width="3.5" height="2.6" fill="#fff"/>
<rect x="295.6" y="91" width="3.5" height="2.6" fill="#fff"/>
<rect x="295.6" y="94.9" width="3.5" height="2.6" fill="#fff"/>
<rect x="295.6" y="98.8" width="3.5" height="2.6" fill="#fff"/>
<rect x="300.7" y="91" width="3.5" height="2.6" fill="#fff"/>
<rect x="300.7" y="94.9" width="3.5" height="2.6" fill="#fff"/>
<rect x="300.7" y="98.8" width="3.5" height="2.6" fill="#fff"/>
<path d="M308 93h5l-2.5 3z" fill="#111"/>
<rect x="322.5" y="87.5" width="15" height="15" fill="#fff" stroke="#8a5aa8" stroke-width="1.1"/><rect x="322.5" y="87.5" width="15" height="2.5" fill="#8a5aa8"/><path d="M324.5 93.5h3M324.5 98.5h3" stroke="#8a5aa8"/><rect x="329.5" y="92.5" width="6" height="2.5" fill="none" stroke="#8a5aa8" stroke-width="0.9"/><rect x="329.5" y="97.5" width="6" height="2.5" fill="none" stroke="#8a5aa8" stroke-width="0.9"/>
<path d="M341 93h5l-2.5 3z" fill="#111"/>
<rect x="354" y="87" width="1" height="15" fill="#bcc4d0"/>
<text x="359.5" y="100.6" font-family="Liberation Sans" font-size="16" font-weight="bold" fill="#6a6a6a" letter-spacing="-0.6">br</text>
<path d="M383.5 97v3.3h15v-3.3" fill="none" stroke="#3f78b8" stroke-width="1.8"/>
<path d="M406.5 102.2h4.5v-2.2c-2.5-1.5-4-4-4-6.8 0-3.5 2.8-5.8 6.8-5.8s6.8 2.3 6.8 5.8c0 2.8-1.5 5.3-4 6.8v2.2h4.5" fill="none" stroke="#4070a8" stroke-width="1.9"/>
<rect x="428" y="87" width="1" height="15" fill="#bcc4d0"/>
<path d="M438.5 87h11.2c0.8 0 1 2.5 0 2.5h-1.7l1.3 3c0.8 2 1.2 4 1.2 6 0 2.2-1 3.8-3 3.8h-10.5l1.6-2.5-4.4 0.2 3-3.5-1.2-3.8c-0.8-2.5-1.5-3.5-1.5-4.5 0-0.8 0.8-1.2 1.5-1.2z" fill="#3f80ac"/><path d="M440 89.5h8" stroke="#9cc4dc" stroke-width="0.8"/><path d="M438.5 93.8h7.2M440 95.8h7.2M440.8 97.8h7M441 99.8h6.8" stroke="#e6f4fc" stroke-width="1.1"/>
<rect x="456" y="87" width="1" height="15" fill="#bcc4d0"/>
<path d="M471 87.5h6.5v6.5l-8.5 8.5-6.5-6.5z" fill="#3d72b8"/><circle cx="474.5" cy="90.5" r="1.2" fill="#fff"/>
<path d="M481 93h5l-2.5 3z" fill="#111"/>
<path d="M509.5 88.5l-4.5 6" stroke="#6a6a6a" stroke-width="3" stroke-linecap="round"/><path d="M503 93l-3.5-0.5-5 5.5 4.5 4.5 5.5-5z" fill="#e9b75c"/><path d="M501 93.5l4 3.5" stroke="#6a6a6a" stroke-width="1.6"/>
<path d="M517 93h5l-2.5 3z" fill="#111"/>
<rect x="527" y="87" width="1" height="15" fill="#bcc4d0"/>
<defs><linearGradient id="lgB" x1="0" y1="0" x2="0" y2="1"><stop offset="0" stop-color="#4a8af0"/><stop offset="1" stop-color="#4a8af0"/></linearGradient></defs><path d="M541 87.3c-1.6 0-2.8 0.9-3.7 2.4l-4 7c-1.4 2.5 0.2 5.3 3 5.3h9.4c2.8 0 4.4-2.8 3-5.3l-4-7c-0.9-1.5-2.1-2.4-3.7-2.4z" fill="#4a8af0"/><path d="M535 92.5l-1.7 4.2c-1.4 2.5 0.2 5.3 3 5.3h5l-2-5z" fill="#e84c3d"/><path d="M547 92.5l1.7 4.2c1.4 2.5-0.2 5.3-3 5.3h-5l2-5z" fill="#34a853"/><path d="M538 97h6l2 5h-10z" fill="#fbbc05"/><path d="M541 93.5l-2 3.5h4z" fill="#fff"/>
<rect x="554" y="83" width="12" height="25" rx="1.5" fill="url(#ovg)"/><rect x="557.0" y="99" width="6" height="1" fill="#111"/><path d="M557.0 101h6l-3 3.5z" fill="#111"/>
<rect x="571" y="88" width="2" height="2" fill="#b4b8c0"/><rect x="571" y="92" width="2" height="2" fill="#b4b8c0"/><rect x="571" y="96" width="2" height="2" fill="#b4b8c0"/><rect x="571" y="100" width="2" height="2" fill="#b4b8c0"/>
<text x="579" y="102.4" font-family="Liberation Sans" font-size="20" fill="#6a6a6a">A</text>
<path d="M598 93h5l-2.5 3z" fill="#111"/>
<text x="615" y="102.4" font-family="Liberation Sans" font-size="16" fill="#9a9a9a">A</text><text x="612" y="102.4" font-family="Liberation Sans" font-size="16" fill="#6a6a6a">A</text>
<path d="M631 93h5l-2.5 3z" fill="#111"/>
<rect x="644" y="87" width="1" height="15" fill="#bcc4d0"/>
<text x="652" y="100.6" font-family="Liberation Sans" font-size="14.5" font-weight="bold" fill="#6a6a6a">B</text>
<path d="M684 89.5l-4 11" stroke="#6a6a6a" stroke-width="2.2"/>
<path d="M699.5 89.5v6c0 2.3 1.5 3.5 4.8 3.5s4.8-1.2 4.8-3.5v-6" fill="none" stroke="#6a6a6a" stroke-width="1.8"/><rect x="698" y="100.5" width="12" height="1.2" fill="#6a6a6a"/>
<text x="721.5" y="100.6" font-family="Liberation Sans" font-size="14.5" fill="#6a6a6a" font-style="italic">S</text><rect x="720" y="94.5" width="14" height="1.2" fill="#6a6a6a"/>
<path d="M738 93h5l-2.5 3z" fill="#111"/>
<rect x="751" y="87" width="1" height="15" fill="#bcc4d0"/>
<rect x="758" y="88" width="13" height="1.3" fill="#666"/>
<rect x="781.5" y="88" width="13" height="1.3" fill="#666"/>
<rect x="805" y="88" width="13" height="1.3" fill="#666"/>
<rect x="827.5" y="88" width="13.5" height="1.3" fill="#666"/>
<rect x="758" y="90.5" width="9" height="1.3" fill="#666"/>
<rect x="783.5" y="90.5" width="9" height="1.3" fill="#666"/>
<rect x="809" y="90.5" width="9" height="1.3" fill="#666"/>
<rect x="827.5" y="90.5" width="13.5" height="1.3" fill="#666"/>
<rect x="758" y="93" width="13" height="1.3" fill="#666"/>
<rect x="781.5" y="93" width="13" height="1.3" fill="#666"/>
<rect x="805" y="93" width="13" height="1.3" fill="#666"/>
<rect x="827.5" y="93" width="13.5" height="1.3" fill="#666"/>
<rect x="758" y="95.5" width="9" height="1.3" fill="#666"/>
<rect x="783.5" y="95.5" width="9" height="1.3" fill="#666"/>
<rect x="809" y="95.5" width="9" height="1.3" fill="#666"/>
<rect x="827.5" y="95.5" width="13.5" height="1.3" fill="#666"/>
<rect x="758" y="98" width="13" height="1.3" fill="#666"/>
<rect x="781.5" y="98" width="13" height="1.3" fill="#666"/>
<rect x="805" y="98" width="13" height="1.3" fill="#666"/>
<rect x="827.5" y="98" width="13.5" height="1.3" fill="#666"/>
<rect x="758" y="100.5" width="9" height="1.3" fill="#666"/>
<rect x="783.5" y="100.5" width="9" height="1.3" fill="#666"/>
<rect x="809" y="100.5" width="9" height="1.3" fill="#666"/>
<rect x="827.5" y="100.5" width="13.5" height="1.3" fill="#666"/>
<path d="M852 88l-2.5 3h5z M852 102.5l-2.5-3h5z" fill="#4a78a8"/><path d="M852 90.5v3M852 97v3" stroke="#4a78a8" stroke-width="1.8"/>
<rect x="856" y="89.5" width="9" height="1.3" fill="#666"/>
<rect x="856" y="95" width="9" height="1.3" fill="#666"/>
<rect x="856" y="100.5" width="9" height="1.3" fill="#666"/>
<path d="M868 93h5l-2.5 3z" fill="#111"/>
<rect x="881" y="87" width="1" height="15" fill="#bcc4d0"/>
<rect x="888.5" y="87.5" width="13" height="15" fill="#fff" stroke="#6a6a6a" stroke-width="1.1"/><path d="M890.5 93.5h9M890.5 95.8h9M890.5 98h9" stroke="#666" stroke-width="0.9"/>
<rect x="909" y="87" width="1" height="15" fill="#bcc4d0"/>
<path d="M918 98l5-10.5 5 10.5M919.5 94.5h7" fill="none" stroke="#6a6a6a" stroke-width="1.5"/><rect x="916" y="99.3" width="14" height="3.4" fill="#6a6a6a"/>
<path d="M944 89.5l6 6-6.5 7-6-6z" fill="#8a8a8a"/><path d="M944.5 87v6.5" stroke="#555" stroke-width="1"/><circle cx="944.5" cy="93.8" r="1" fill="#fff"/><path d="M947.5 93.5c2.5-1 5-0.5 5.5 2v6.5" fill="none" stroke="#3a6ab0" stroke-width="2"/>
<rect x="960" y="83" width="10" height="25" rx="1.5" fill="url(#ovg)"/><rect x="962.0" y="99" width="6" height="1" fill="#111"/><path d="M962.0 101h6l-3 3.5z" fill="#111"/>
<path d="M723 144h5.5l1.5 1.5h7v3h-14z" fill="#8c7030"/><path d="M723 148h14v8.5h-14z" fill="#e8b55c"/>
<path d="M738.5 145.5c-0.5-2.5-2.5-3.8-5.5-3.5" fill="none" stroke="#4a72a8" stroke-width="1.6"/><path d="M734.5 139.5l-3.5 2.8 3.5 2.5z" fill="#4a72a8"/>
<path d="M746.5 140h5.5l1.5 1.5h6.5v3h-13.5z" fill="#8c7030"/><path d="M746.5 144h13.5v9h-13.5z" fill="#e8b55c"/>
<circle cx="757.5" cy="152.5" r="4.3" fill="#3f9a6a" stroke="#eef3fb" stroke-width="0.8"/><path d="M757.5 150v5M755 152.5h5" stroke="#fff" stroke-width="1.3"/>
<rect x="769" y="141" width="1" height="15" fill="#bcc4d0"/>
<rect x="775" y="141" width="15.5" height="15.5" fill="#fff" stroke="#666" stroke-width="1.1"/><rect x="775" y="141" width="15.5" height="2.5" fill="#3f9a6a"/><rect x="777.5" y="145.5" width="4.5" height="4.5" fill="none" stroke="#666" stroke-width="1"/><rect x="783.5" y="145.5" width="4.5" height="4.5" fill="none" stroke="#666" stroke-width="1"/><path d="M777.5 152.5h4.5M783.5 152.5h4.5" stroke="#666"/>
<path d="M794 147h5l-2.5 3z" fill="#111"/>
<rect x="806" y="141" width="1" height="15" fill="#bcc4d0"/>
<path d="M812 142h5.5l1.5 1.5h9v3h-16z" fill="#8c7030"/><path d="M812 146h16v10h-16z" fill="#e8b55c"/>
<path d="M831 147h5l-2.5 3z" fill="#111"/>
<rect x="843" y="141" width="1" height="15" fill="#bcc4d0"/>
<path d="M849 141h5.5l1.5 1.5h7v3h-14z" fill="#8c7030"/><path d="M849 145h14v10h-14z" fill="#e8b55c"/>
<circle cx="860" cy="152" r="4.5" fill="#dbe8f6" stroke="#3f6fa8" stroke-width="1.1"/><path d="M855.5 152h9M860 147.5v9" stroke="#3f6fa8" stroke-width="0.9"/><ellipse cx="860" cy="152" rx="2" ry="4.5" fill="none" stroke="#3f6fa8" stroke-width="0.9"/>
<rect x="918" y="141" width="1" height="15" fill="#bcc4d0"/>
<circle cx="931" cy="147.5" r="6.5" fill="none" stroke="#4a6fa0" stroke-width="1.6"/><ellipse cx="931" cy="147.5" rx="2.8" ry="6.5" fill="none" stroke="#4a6fa0" stroke-width="1.2"/><path d="M924.5 147.5h13M925.5 144h11M925.5 151h11" stroke="#4a6fa0" stroke-width="1.1"/><circle cx="936" cy="152" r="4.3" fill="#3f9a6a" stroke="#eef3fb" stroke-width="0.8"/><path d="M936 155v-5M934 152l2-2 2 2" fill="none" stroke="#fff" stroke-width="1.1"/>
</svg>
<svg class="abs" style="left:0;top:0" width="972" height="699">
<rect x="723.5" y="167.5" width="8" height="8" fill="#fff" stroke="#a0a0a8" stroke-width="1"/><rect x="725" y="171" width="5" height="1" fill="#333"/><rect x="727" y="169" width="1" height="5" fill="#333"/>
<rect x="741" y="164" width="11" height="15.5" fill="#f8dc78"/><rect x="751" y="172" width="2.2" height="7.5" fill="#e9bf4a"/>
<circle cx="743.8" cy="175" r="5" fill="#2a7f2a"/><path d="M741.1999999999999 175.2l1.9 2.2 3.6-4.2" fill="none" stroke="#fff" stroke-width="1.5"/>
<rect x="723.5" y="187.5" width="8" height="8" fill="#fff" stroke="#a0a0a8" stroke-width="1"/><rect x="725" y="191" width="5" height="1" fill="#333"/>
<rect x="741" y="184" width="11" height="15.5" fill="#f8dc78"/><rect x="751" y="192" width="2.2" height="7.5" fill="#e9bf4a"/>
<circle cx="743.8" cy="195" r="4.8" fill="#d63a2a"/><rect x="743.0" y="192" width="1.6" height="3.8" fill="#fff"/><rect x="743.0" y="196.6" width="1.6" height="1.5" fill="#fff"/>
<rect x="741.5" y="207.5" width="8" height="8" fill="#fff" stroke="#a0a0a8" stroke-width="1"/><rect x="743" y="211" width="5" height="1" fill="#333"/><rect x="745" y="209" width="1" height="5" fill="#333"/>
<rect x="759" y="204" width="11" height="15.5" fill="#f8dc78"/><rect x="769" y="212" width="2.2" height="7.5" fill="#e9bf4a"/>
<circle cx="761.8" cy="215" r="5" fill="#2a7f2a"/><path d="M759.1999999999999 215.2l1.9 2.2 3.6-4.2" fill="none" stroke="#fff" stroke-width="1.5"/>
<rect x="741.5" y="227.5" width="8" height="8" fill="#fff" stroke="#a0a0a8" stroke-width="1"/><rect x="743" y="231" width="5" height="1" fill="#333"/><rect x="745" y="229" width="1" height="5" fill="#333"/>
<rect x="759" y="224" width="11" height="15.5" fill="#f8dc78"/><rect x="769" y="232" width="2.2" height="7.5" fill="#e9bf4a"/>
<circle cx="761.8" cy="235" r="5" fill="#2a7f2a"/><path d="M759.1999999999999 235.2l1.9 2.2 3.6-4.2" fill="none" stroke="#fff" stroke-width="1.5"/>
<rect x="741.5" y="247.5" width="8" height="8" fill="#fff" stroke="#a0a0a8" stroke-width="1"/><rect x="743" y="251" width="5" height="1" fill="#333"/><rect x="745" y="249" width="1" height="5" fill="#333"/>
<rect x="759" y="244" width="11" height="15.5" fill="#f8dc78"/><rect x="769" y="252" width="2.2" height="7.5" fill="#e9bf4a"/>
<circle cx="761.8" cy="255" r="5" fill="#2a7f2a"/><path d="M759.1999999999999 255.2l1.9 2.2 3.6-4.2" fill="none" stroke="#fff" stroke-width="1.5"/>
<rect x="741.5" y="267.5" width="8" height="8" fill="#fff" stroke="#a0a0a8" stroke-width="1"/><rect x="743" y="271" width="5" height="1" fill="#333"/><rect x="745" y="269" width="1" height="5" fill="#333"/>
<rect x="759" y="264" width="11" height="15.5" fill="#f8dc78"/><rect x="769" y="272" width="2.2" height="7.5" fill="#e9bf4a"/>
<circle cx="761.8" cy="275" r="5" fill="#2a7f2a"/><path d="M759.1999999999999 275.2l1.9 2.2 3.6-4.2" fill="none" stroke="#fff" stroke-width="1.5"/>
<rect x="776" y="282" width="46" height="20" fill="#eceef1"/>
<rect x="759" y="284" width="11" height="15.5" fill="#86aab8"/><rect x="769" y="292" width="2.2" height="7.5" fill="#6f96a4"/>
<circle cx="761.8" cy="295" r="5" fill="#2a7f2a"/><path d="M759.1999999999999 295.2l1.9 2.2 3.6-4.2" fill="none" stroke="#fff" stroke-width="1.5"/>
<rect x="759" y="304" width="11" height="15.5" fill="#f8dc78"/><rect x="769" y="312" width="2.2" height="7.5" fill="#e9bf4a"/>
<circle cx="761.8" cy="315" r="5" fill="#2a7f2a"/><path d="M759.1999999999999 315.2l1.9 2.2 3.6-4.2" fill="none" stroke="#fff" stroke-width="1.5"/>
<rect x="759" y="324" width="11" height="15.5" fill="#f8dc78"/><rect x="769" y="332" width="2.2" height="7.5" fill="#e9bf4a"/>
<circle cx="761.8" cy="335" r="5" fill="#2a7f2a"/><path d="M759.1999999999999 335.2l1.9 2.2 3.6-4.2" fill="none" stroke="#fff" stroke-width="1.5"/>
<rect x="741.5" y="347.5" width="8" height="8" fill="#fff" stroke="#a0a0a8" stroke-width="1"/><rect x="743" y="351" width="5" height="1" fill="#333"/><rect x="745" y="349" width="1" height="5" fill="#333"/>
<rect x="759" y="344" width="11" height="15.5" fill="#f8dc78"/><rect x="769" y="352" width="2.2" height="7.5" fill="#e9bf4a"/>
<circle cx="761.8" cy="355" r="5" fill="#2a7f2a"/><path d="M759.1999999999999 355.2l1.9 2.2 3.6-4.2" fill="none" stroke="#fff" stroke-width="1.5"/>
<rect x="741.5" y="367.5" width="8" height="8" fill="#fff" stroke="#a0a0a8" stroke-width="1"/><rect x="743" y="371" width="5" height="1" fill="#333"/><rect x="745" y="369" width="1" height="5" fill="#333"/>
<rect x="759" y="364" width="11" height="15.5" fill="#f8dc78"/><rect x="769" y="372" width="2.2" height="7.5" fill="#e9bf4a"/>
<circle cx="761.8" cy="375" r="4.8" fill="#d63a2a"/><rect x="761.0" y="372" width="1.6" height="3.8" fill="#fff"/><rect x="761.0" y="376.6" width="1.6" height="1.5" fill="#fff"/>
<path d="M724.5 392.5h8l4 4v11h-12z" fill="#fff" stroke="#a0a4ac" stroke-width="1"/><path d="M732.5 392.5v4h4" fill="none" stroke="#a0a4ac" stroke-width="1"/><path d="M721 395h9.8v8.5c0 2.5-2 3.8-4.9 4.5-2.9-0.7-4.9-2-4.9-4.5z" fill="#2f3f80"/><path d="M721.8 397.5h8.2v6c0 2-1.6 3.2-4.1 3.8-2.5-0.6-4.1-1.8-4.1-3.8z" fill="#2a852a"/><path d="M722.8 401.5l2.3 2.8 4.6-5.6" fill="none" stroke="#fff" stroke-width="1.5"/>
<path d="M724.5 412.5h8l4 4v11h-12z" fill="#fff" stroke="#a0a4ac" stroke-width="1"/><path d="M732.5 412.5v4h4" fill="none" stroke="#a0a4ac" stroke-width="1"/><path d="M721 415h9.8v8.5c0 2.5-2 3.8-4.9 4.5-2.9-0.7-4.9-2-4.9-4.5z" fill="#2f3f80"/><path d="M721.8 417.5h8.2v6c0 2-1.6 3.2-4.1 3.8-2.5-0.6-4.1-1.8-4.1-3.8z" fill="#2a852a"/><path d="M722.8 421.5l2.3 2.8 4.6-5.6" fill="none" stroke="#fff" stroke-width="1.5"/>
<rect x="740" y="430" width="35" height="20" fill="#eceef1"/>
<path d="M724.5 432.5h8l4 4v11h-12z" fill="#6aa8e8" stroke="#4a7ec0" stroke-width="1"/><path d="M732.5 432.5v4h4" fill="none" stroke="#4a7ec0" stroke-width="1"/><path d="M721 435h9.8v8.5c0 2.5-2 3.8-4.9 4.5-2.9-0.7-4.9-2-4.9-4.5z" fill="#2f3f80"/><path d="M721.8 437.5h8.2v6c0 2-1.6 3.2-4.1 3.8-2.5-0.6-4.1-1.8-4.1-3.8z" fill="#2a852a"/><path d="M722.8 441.5l2.3 2.8 4.6-5.6" fill="none" stroke="#fff" stroke-width="1.5"/>
<path d="M724.5 452.5h8l4 4v11h-12z" fill="#fff" stroke="#a0a4ac" stroke-width="1"/><path d="M732.5 452.5v4h4" fill="none" stroke="#a0a4ac" stroke-width="1"/><path d="M721 455h9.8v8.5c0 2.5-2 3.8-4.9 4.5-2.9-0.7-4.9-2-4.9-4.5z" fill="#2f3f80"/><path d="M721.8 457.5h8.2v6c0 2-1.6 3.2-4.1 3.8-2.5-0.6-4.1-1.8-4.1-3.8z" fill="#2a852a"/><path d="M722.8 461.5l2.3 2.8 4.6-5.6" fill="none" stroke="#fff" stroke-width="1.5"/>
</svg>
<div class="tx tr" style="left:762px;top:165px">csstool</div>
<div class="tx tr" style="left:762px;top:185px">engine</div>
<div class="tx tr" style="left:780px;top:205px">css</div>
<div class="tx tr" style="left:780px;top:225px">fancybox</div>
<div class="tx tr" style="left:780px;top:245px">images</div>
<div class="tx tr" style="left:780px;top:265px">js</div>
<div class="tx tr" style="left:780px;top:285px">layouts</div>
<div class="tx tr" style="left:780px;top:305px">lib</div>
<div class="tx tr" style="left:780px;top:325px">qresponse</div>
<div class="tx tr" style="left:780px;top:345px">showcase</div>
<div class="tx tr" style="left:780px;top:365px">templates</div>
<div class="tx tr" style="left:744px;top:393px">blank</div>
<div class="tx tr" style="left:744px;top:413px">form</div>
<div class="tx tr" style="left:744px;top:433px">main</div>
<div class="tx tr" style="left:744px;top:453px">popup</div>
<div id="frame"></div>
</body></html>
